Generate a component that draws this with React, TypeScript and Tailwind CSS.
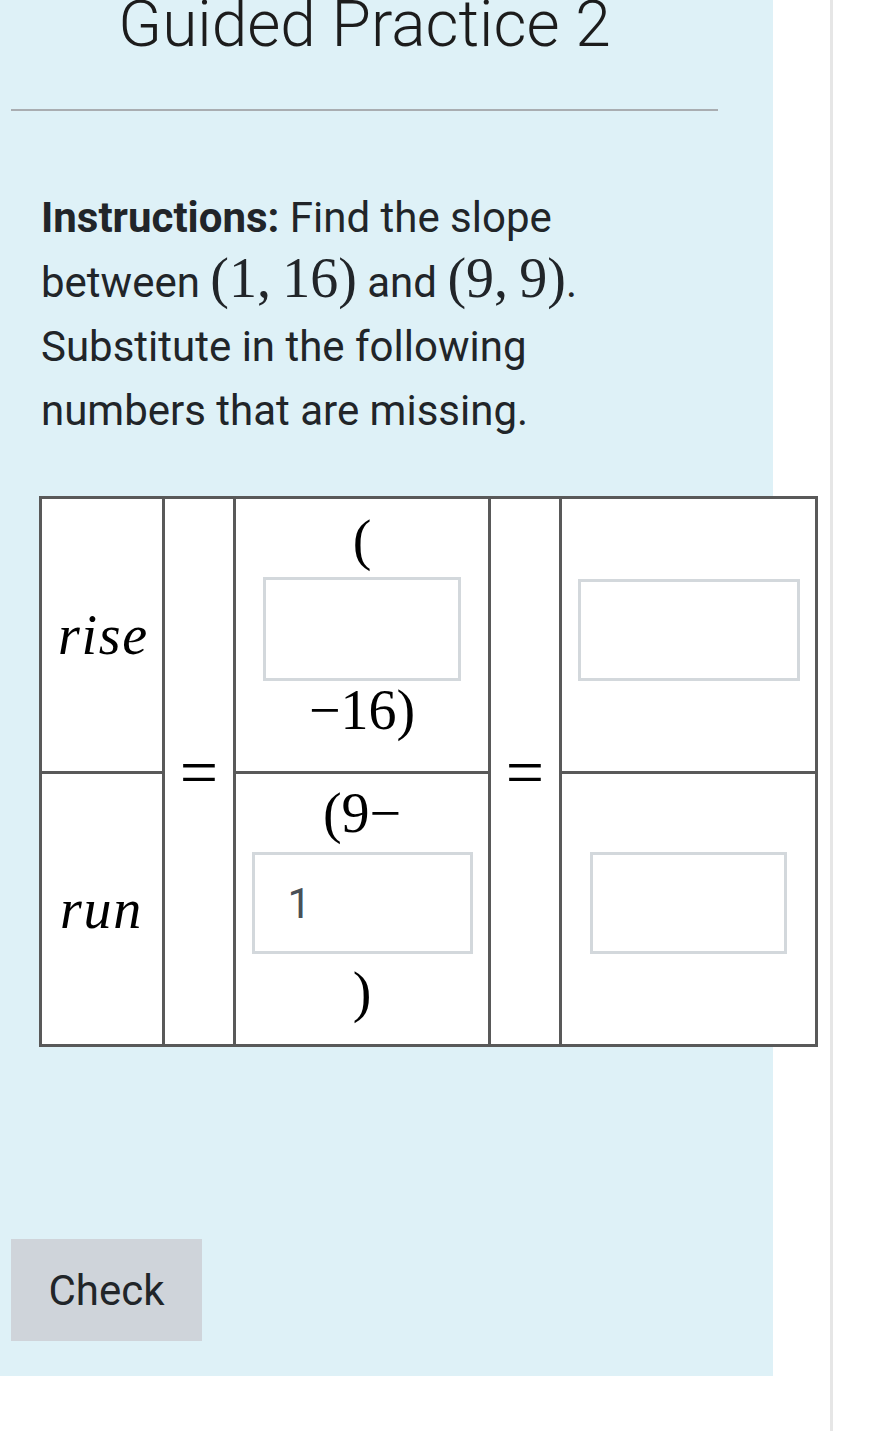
import React from "react";

const math = "font-['Liberation_Serif','DejaVu_Serif',serif]";

function Box({ w, h, children }: { w: string; h: string; children?: React.ReactNode }) {
  return (
    <div className={`${w} ${h} border-[3px] border-[#d3d8dc] bg-white flex items-center`}>
      {children}
    </div>
  );
}

export default function App() {
  return (
    <div className="flex min-h-[1431px] w-[875px] bg-white font-['Roboto','Liberation_Sans',sans-serif] text-[#212529]">
      <div className="w-[773px] shrink-0 self-start bg-[#def1f7] pl-[11px] pb-[35px]">
        <h1 className="mt-[-12px] w-[707px] text-center text-[64px] font-light leading-[74px] text-[#1c1c1c]">
          Guided Practice 2
        </h1>
        <div className="mt-[47px] h-[2px] w-[707px] bg-[#a9adb1]" />
        <p className="ml-[30px] mt-[75px] text-[42px] leading-[64px]">
          <b className="font-bold">Instructions:</b> Find the slope
          <br />
          between{" "}
          <span className={`${math} text-[56px] leading-none`}>(1,&#8201;16)</span> and{" "}
          <span className={`${math} text-[56px] leading-none`}>(9,&#8201;9)</span>.
          <br />
          Substitute in the following
          <br />
          numbers that are missing.
        </p>

        <div
          className={`${math} ml-[28px] mt-[53px] grid w-[779px] grid-cols-[120px_68px_252px_68px_253px] grid-rows-[272px_270px] gap-[3px] border-[3px] border-[#595959] bg-[#595959] text-[56px] text-black`}
        >
          <div className="col-start-1 row-start-1 flex items-center bg-white pl-[16px] italic tracking-[0.03em]">
            rise
          </div>
          <div className="col-start-2 row-span-2 row-start-1 flex items-center justify-center bg-white text-[68px]">
            =
          </div>
          <div className="col-start-3 row-start-1 flex flex-col items-center bg-white pt-[15px]">
            <span className="h-[52px] leading-[52px]">(</span>
            <div className="mt-[11px]">
              <Box w="w-[198px]" h="h-[104px]" />
            </div>
            <span className="mt-[3px] h-[52px] leading-[52px]">−16)</span>
          </div>
          <div className="col-start-4 row-span-2 row-start-1 flex items-center justify-center bg-white text-[68px]">
            =
          </div>
          <div className="col-start-5 row-start-1 flex items-center justify-center bg-white pb-[11px]">
            <Box w="w-[222px]" h="h-[102px]" />
          </div>

          <div className="col-start-1 row-start-2 flex items-center bg-white pl-[18px] italic tracking-[0.03em]">
            run
          </div>
          <div className="col-start-3 row-start-2 flex flex-col items-center bg-white pt-[13px]">
            <span className="h-[52px] leading-[52px]">(9−</span>
            <div className="mt-[13px]">
              <Box w="w-[221px]" h="h-[102px]">
                <span className="pl-[33px] font-['Roboto','Liberation_Sans',sans-serif] text-[42px] text-[#495057]">
                  1
                </span>
              </Box>
            </div>
            <span className="mt-[12px] h-[52px] leading-[52px]">)</span>
          </div>
          <div className="col-start-5 row-start-2 flex items-center justify-center bg-white pb-[12px]">
            <Box w="w-[197px]" h="h-[102px]" />
          </div>
        </div>

        <button className="mt-[192px] flex h-[102px] w-[191px] items-center justify-center bg-[#cfd4da] text-[42px] text-[#212529]">
          Check
        </button>
      </div>
      <div className="w-[57px] shrink-0" />
      <div className="w-[3px] shrink-0 bg-[#e6e6e6]" />
      <div className="flex-1" />
    </div>
  );
}
